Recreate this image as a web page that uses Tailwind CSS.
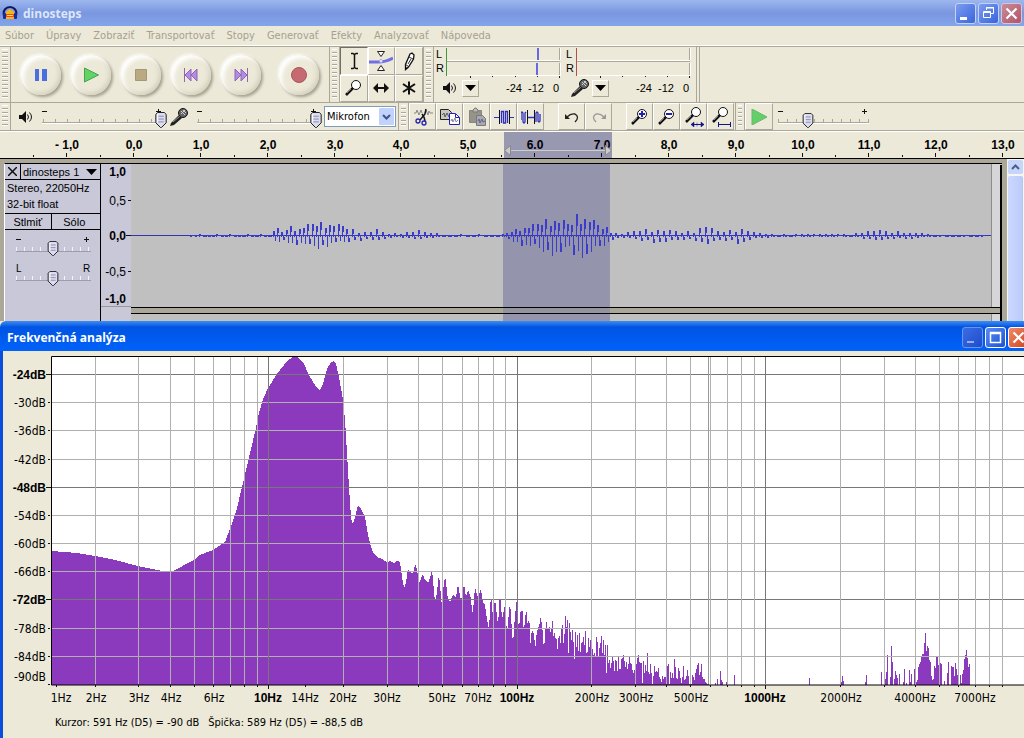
<!DOCTYPE html>
<html lang="sk">
<head>
<meta charset="utf-8">
<title>dinosteps</title>
<script src="https://cdn.jsdelivr.net/npm/@tailwindcss/browser@4"></script>
</head>
<body class="min-h-screen overflow-x-hidden bg-[#ece9d8] font-['DejaVu_Sans_Condensed','DejaVu_Sans',sans-serif] text-[11px] leading-4 text-black">

<svg class="hidden">
  <defs>
    <symbol id="thumb" viewBox="0 0 12 17"><path d="M2.500.500h7l2 2v9l-5 5h-1l-5-5v-9z" fill="#dcdcf0" stroke="#111"/><path d="M3 4.500h6M3 7.500h6M3 10.500h6" stroke="#8888a8"/><path d="M2.500 2v9" stroke="#fff"/></symbol>
    <symbol id="mic" viewBox="0 0 20 20"><path d="M1 19l1-3 8-8 3 3-8 7z" fill="#222"/><path d="M4 15l7-6" stroke="#999"/><circle cx="14" cy="6" r="4.500" fill="#666" stroke="#111"/><path d="M12 4l4 4M14 3l3 3M12 7l4-4" stroke="#ccc"/></symbol>
    <symbol id="speaker" viewBox="0 0 14 12"><path d="M0 4h3l4-4v12l-4-4H0z" fill="#111"/><path d="M8.500 3.500q2 2.500 0 5M10.500 1.500q4 4.500 0 9" fill="none" stroke="#111"/></symbol>
    <symbol id="lens" viewBox="0 0 20 20"><circle cx="12" cy="7" r="4.500" fill="#fff" stroke="#111"/><path d="M9 10l-7 7" stroke="#111" stroke-width="2.500"/><path d="M3 15l4-4" stroke="#888"/></symbol>
  </defs>
</svg>

<header class="flex h-[26px] items-center gap-[2px] bg-linear-to-b from-[#9db8ee] via-[#7a96df] to-[#82a6ea] px-[2px]">
  <svg class="size-4 shrink-0" viewBox="0 0 16 16"><path d="M2 11C-1 -1 17 -1 14 11" fill="none" stroke="#11185e" stroke-width="2"/><path d="M4 14V7q4-5 8 0v7z" fill="#f6b51e"/><path d="M4 9h8v3H4z" fill="#e8501c"/><path d="M5 10.500h6" stroke="#ffe14a"/><rect x="1" y="8" width="3" height="6" rx="1" fill="#1a2a9a"/><rect x="12" y="8" width="3" height="6" rx="1" fill="#1a2a9a"/></svg>
  <h1 class="flex-1 pt-[2px] pl-[3px] font-['Open_Sans','Noto_Sans',sans-serif] text-[12px] font-bold text-[#dce7fa]">dinosteps</h1>
  <div class="flex gap-[2px]">
    <button aria-label="Minimalizovať" class="size-[21px] rounded-[3px] border border-[#c3d3f6] bg-linear-to-br from-[#7c9cf0] to-[#3a63dc]"><svg viewBox="0 0 19 19"><path d="M4 13h7v3H4z" fill="#fff"/></svg></button>
    <button aria-label="Obnoviť" class="size-[21px] rounded-[3px] border border-[#c3d3f6] bg-linear-to-br from-[#7c9cf0] to-[#3a63dc]"><svg viewBox="0 0 19 19" fill="none" stroke="#fff"><path d="M7.500 6V3.500h7v6H12M7 4h8"/><path d="M4.500 7.500h7v6h-7zM4 8.500h8"/></svg></button>
    <button aria-label="Zavrieť" class="size-[21px] rounded-[3px] border border-[#d9c4d8] bg-linear-to-br from-[#c98a97] to-[#b0556a]"><svg viewBox="0 0 19 19"><path d="M4.500 4.500l10 10M14.500 4.500l-10 10" stroke="#fff" stroke-width="2.200"/></svg></button>
  </div>
</header>

<nav class="flex h-[20px] items-center gap-[12px] border-b border-white pl-[5px] text-[#a5a191]">
  <a href="#">Súbor</a><a href="#">Úpravy</a><a href="#">Zobraziť</a><a href="#">Transportovať</a><a href="#">Stopy</a><a href="#">Generovať</a><a href="#">Efekty</a><a href="#">Analyzovať</a><a href="#">Nápoveda</a>
</nav>

<section aria-label="Ovládanie" class="flex h-[57px] border-y border-[#aca899]">
  <div class="flex w-[11px] shrink-0 border-r border-[#aca899] p-[2px]"><i class="flex-1 bg-[repeating-linear-gradient(to_bottom,#fff_0_1px,#ece9d8_1px_3px,#aca899_3px_4px)]"></i></div>
  <div class="flex w-[318px] shrink-0 items-center gap-[10px] pl-[10px]">
    <button aria-label="Pozastaviť" class="grid size-[40px] place-items-center rounded-full bg-[#ece9d8] shadow-[2px_2px_3px_#a5a08e,-1px_-1px_3px_#fff,inset_3px_3px_4px_#fff,inset_-2px_-2px_4px_#d5d0bd]"><svg class="size-4" viewBox="0 0 16 16"><path d="M2 2h4v12H2zM9 2h5v12H9z" fill="#4c6fe0"/></svg></button>
    <button aria-label="Prehrať" class="grid size-[40px] place-items-center rounded-full bg-[#ece9d8] shadow-[2px_2px_3px_#a5a08e,-1px_-1px_3px_#fff,inset_3px_3px_4px_#fff,inset_-2px_-2px_4px_#d5d0bd]"><svg class="size-4" viewBox="0 0 16 16"><path d="M1.500 1v14l14-7z" fill="#60d465" stroke="#48a050"/></svg></button>
    <button aria-label="Zastaviť" class="grid size-[40px] place-items-center rounded-full bg-[#ece9d8] shadow-[2px_2px_3px_#a5a08e,-1px_-1px_3px_#fff,inset_3px_3px_4px_#fff,inset_-2px_-2px_4px_#d5d0bd]"><svg class="size-4" viewBox="0 0 16 16"><path d="M2.500 2.500h11v11h-11z" fill="#baa982" stroke="#a39776"/></svg></button>
    <button aria-label="Na začiatok" class="grid size-[40px] place-items-center rounded-full bg-[#ece9d8] shadow-[2px_2px_3px_#a5a08e,-1px_-1px_3px_#fff,inset_3px_3px_4px_#fff,inset_-2px_-2px_4px_#d5d0bd]"><svg class="size-4" viewBox="0 0 16 16"><path d="M1.500 1v14M8 2v12L2 8zM14 2v12L8 8z" fill="#b58ae4" stroke="#8a68b4"/></svg></button>
    <button aria-label="Na koniec" class="grid size-[40px] place-items-center rounded-full bg-[#ece9d8] shadow-[2px_2px_3px_#a5a08e,-1px_-1px_3px_#fff,inset_3px_3px_4px_#fff,inset_-2px_-2px_4px_#d5d0bd]"><svg class="size-4" viewBox="0 0 16 16"><path d="M14.500 1v14M8 2v12l6-6zM2 2v12l6-6z" fill="#b58ae4" stroke="#8a68b4"/></svg></button>
    <button aria-label="Nahrávať" class="ml-2 grid size-[40px] place-items-center rounded-full bg-[#ece9d8] shadow-[2px_2px_3px_#a5a08e,-1px_-1px_3px_#fff,inset_3px_3px_4px_#fff,inset_-2px_-2px_4px_#d5d0bd]"><svg class="size-4" viewBox="0 0 16 16"><circle cx="8" cy="8" r="7.500" fill="#c46a70" stroke="#a8555c"/></svg></button>
  </div>
  <div class="flex w-[11px] shrink-0 border-x border-[#aca899] p-[2px]"><i class="flex-1 bg-[repeating-linear-gradient(to_bottom,#fff_0_1px,#ece9d8_1px_3px,#aca899_3px_4px)]"></i></div>
  <div class="grid w-[83px] shrink-0 grid-cols-3 grid-rows-2">
    <button aria-label="Výber" class="grid place-items-center border border-t-[#716f64] border-r-white border-b-white border-l-[#716f64]"><svg class="size-5" viewBox="0 0 20 20"><path d="M7 2.500h2l1.500 1 1.500-1h2M7 17.500h2l1.500-1 1.500 1h2M10.500 3v14" fill="none" stroke="#111" stroke-width="1.500"/></svg></button>
    <button aria-label="Obálka" class="grid place-items-center border border-t-white border-r-[#aca899] border-b-[#aca899] border-l-white"><svg class="h-5 w-6" viewBox="0 0 24 20"><path d="M0 11h10q6 0 14-4" fill="none" stroke="#7070e4" stroke-width="3"/><path d="M8.500.500h7l-3.500 5zM8.500 19.500h7l-3.500-5z" fill="#fff" stroke="#222"/><circle cx="12" cy="10" r="1.500" fill="#fff" stroke="#a0a0e8"/></svg></button>
    <button aria-label="Kreslenie" class="grid place-items-center border border-t-white border-r-[#aca899] border-b-[#aca899] border-l-white"><svg class="size-5" viewBox="0 0 20 20"><path d="M11 3l2-1 2 2-.5 4-5 8-3 2.500v-5z" fill="#fff" stroke="#111" stroke-width="1.300"/><path d="M10 6l4 2M6.500 13.500l3 2M12 8l-3 5" stroke="#333"/><path d="M6.500 16v2.500l2-1.500z"/></svg></button>
    <button aria-label="Lupa" class="grid place-items-center border border-t-white border-r-[#aca899] border-b-[#aca899] border-l-white"><svg class="size-5"><use href="#lens"/></svg></button>
    <button aria-label="Posun" class="grid place-items-center border border-t-white border-r-[#aca899] border-b-[#aca899] border-l-white"><svg class="size-5" viewBox="0 0 20 20"><path d="M4 10h12" stroke="#111" stroke-width="2"/><path d="M7 5v10l-5-5zM13 5v10l5-5z" fill="#111"/></svg></button>
    <button aria-label="Multi-nástroj" class="grid place-items-center border border-t-white border-r-[#aca899] border-b-[#aca899] border-l-white"><svg class="size-5" viewBox="0 0 20 20"><path d="M10 3.500v13M4 6l12 8M16 6L4 14" stroke="#111" stroke-width="2"/></svg></button>
  </div>
  <div class="flex w-[11px] shrink-0 border-x border-[#aca899] p-[2px]"><i class="flex-1 bg-[repeating-linear-gradient(to_bottom,#fff_0_1px,#ece9d8_1px_3px,#aca899_3px_4px)]"></i></div>
  <div class="flex w-[263px] shrink-0 font-['Liberation_Sans',sans-serif] text-[11px]">
    <div class="w-[130px]">
      <svg class="h-[31px] w-full" viewBox="0 0 130 31"><text x="2" y="11">L</text><text x="2" y="25">R</text><path d="M12.500 1v28" stroke="#3f9a3f"/><path d="M13 13.500h113M126.500 1v12M13 28.500h113M126.500 16v13" fill="none" stroke="#fff"/><path d="M13 14.500h113M125.500 1v12M125.500 16v12" stroke="#aca899"/><path d="M104 1v12M103 16v12" stroke="#6868e6" stroke-width="2"/><path d="M36.500 29v2M58.500 29v1M81.500 29v1M103.500 29v1M125.500 29v2" stroke="#222"/></svg>
      <div class="flex h-[20px] items-center"><svg class="ml-[9px] h-3 w-[14px]"><use href="#speaker"/></svg><button aria-label="Možnosti výstupu" class="ml-[5px] grid size-[17px] place-items-center border border-t-white border-r-[#aca899] border-b-[#aca899] border-l-white"><svg class="h-[6px] w-[11px]" viewBox="0 0 11 6"><path d="M0 0h11L5.500 6z"/></svg></button><span class="ml-auto">-24</span><span class="ml-[6px]">-12</span><span class="mr-[5px] ml-[9px]">0</span></div>
    </div>
    <div class="w-[133px] border-r border-[#aca899] pr-[2px]">
      <svg class="h-[31px] w-full" viewBox="0 0 130 31"><text x="2" y="11">L</text><text x="2" y="25">R</text><path d="M12.500 1v28" stroke="#b05050"/><path d="M13 13.500h113M126.500 1v12M13 28.500h113M126.500 16v13" fill="none" stroke="#fff"/><path d="M13 14.500h113M125.500 1v12M125.500 16v12" stroke="#aca899"/><path d="M36.500 29v2M58.500 29v1M81.500 29v1M103.500 29v1M125.500 29v2" stroke="#222"/></svg>
      <div class="flex h-[20px] items-center"><svg class="ml-[6px] size-5"><use href="#mic"/></svg><button aria-label="Možnosti vstupu" class="ml-[2px] grid size-[17px] place-items-center border border-t-white border-r-[#aca899] border-b-[#aca899] border-l-white"><svg class="h-[6px] w-[11px]" viewBox="0 0 11 6"><path d="M0 0h11L5.500 6z"/></svg></button><span class="ml-auto">-24</span><span class="ml-[6px]">-12</span><span class="mr-[5px] ml-[9px]">0</span></div>
    </div>
  </div>
  <div class="w-[3px] border-r border-[#aca899]"></div>
</section>

<section aria-label="Mixér a úpravy" class="flex h-[28px] items-center border-b border-[#aca899]">
  <div class="flex h-full w-[11px] shrink-0 border-r border-[#aca899] p-[2px]"><i class="flex-1 bg-[repeating-linear-gradient(to_bottom,#fff_0_1px,#ece9d8_1px_3px,#aca899_3px_4px)]"></i></div>
  <svg class="ml-[8px] h-3 w-[14px] shrink-0"><use href="#speaker"/></svg>
  <label class="relative ml-[8px] h-[26px] w-[128px] shrink-0">
    <svg class="size-full" viewBox="0 0 128 26"><path d="M1 7.500h5M115 7.500h5M117.500 5v5" stroke="#111"/><path d="M2 16.500h118" stroke="#aca899" stroke-width="3" stroke-dasharray="1 11"/><path d="M1 18.500h118" stroke="#aca899"/><path d="M1 19.500h118" stroke="#fff"/><use href="#thumb" x="114" y="8" width="12" height="16"/></svg>
    <input type="range" aria-label="Hlasitosť výstupu" value="100" class="absolute inset-0 w-full opacity-0">
  </label>
  <svg class="size-5 shrink-0"><use href="#mic"/></svg>
  <label class="relative ml-[7px] h-[26px] w-[128px] shrink-0">
    <svg class="size-full" viewBox="0 0 128 26"><path d="M1 7.500h5M115 7.500h5M117.500 5v5" stroke="#111"/><path d="M2 16.500h118" stroke="#aca899" stroke-width="3" stroke-dasharray="1 11"/><path d="M1 18.500h118" stroke="#aca899"/><path d="M1 19.500h118" stroke="#fff"/><use href="#thumb" x="114" y="8" width="12" height="16"/></svg>
    <input type="range" aria-label="Hlasitosť vstupu" value="100" class="absolute inset-0 w-full opacity-0">
  </label>
  <div class="relative h-[21px] w-[72px] shrink-0">
    <select aria-label="Zdroj vstupu" class="h-full w-full appearance-none border border-[#7f9db9] bg-white pt-[1px] pl-[2px]"><option>Mikrofon</option></select>
    <svg class="pointer-events-none absolute top-[2px] right-[2px] h-[17px] w-[15px]" viewBox="0 0 15 17"><rect width="15" height="17" rx="1" fill="#c1d2fb"/><path d="M4 7l3.500 3.500L11 7" fill="none" stroke="#3d5489" stroke-width="2"/></svg>
  </div>
  <div class="ml-[2px] flex h-full w-[11px] shrink-0 border-x border-[#aca899] p-[2px]"><i class="flex-1 bg-[repeating-linear-gradient(to_bottom,#fff_0_1px,#ece9d8_1px_3px,#aca899_3px_4px)]"></i></div>
  <div class="flex h-full shrink-0">
    <button aria-label="Vystrihnúť" class="grid w-[27px] place-items-center border border-t-white border-r-[#aca899] border-b-[#aca899] border-l-white"><svg class="size-5" viewBox="0 0 20 20" fill="none"><path d="M1 6h2l1-3 2 5 2-5 1 3M12 6l1-3 2 5 1-4 1 2h3" stroke="#888"/><path d="M13 2l-1 5-5 6M9 7l2 3 1 4" stroke="#112" stroke-width="1.500"/><circle cx="5" cy="14" r="2" stroke="#2222b0" stroke-width="1.300"/><circle cx="11" cy="16" r="2" stroke="#2222b0" stroke-width="1.300"/></svg></button>
    <button aria-label="Kopírovať" class="grid w-[27px] place-items-center border border-t-white border-r-[#aca899] border-b-[#aca899] border-l-white"><svg class="size-5" viewBox="0 0 20 20"><path d="M.500 2.500h8l3 3v7H.500z" fill="#c8c8c0" stroke="#222"/><path d="M2 8l2-2 1 4 2-4 2 4" fill="none" stroke="#555"/><path d="M9.500 6.500h6l4 4v7h-10z" fill="#fff" stroke="#2222b0"/><path d="M15.500 7v3.500h4" fill="none" stroke="#2222b0"/><path d="M11 14l1-2 1 3 2-4 1 4 2-2" fill="none" stroke="#8888a0"/></svg></button>
    <button aria-label="Vložiť" class="grid w-[27px] place-items-center border border-t-white border-r-[#aca899] border-b-[#aca899] border-l-white"><svg class="size-5" viewBox="0 0 20 20"><path d="M2.500 3.500h12v12h-12z" fill="#96948a" stroke="#88867a"/><path d="M6 5V3l2-2h1l2 2v2z" fill="#bbb" stroke="#777"/><path d="M9.500 8.500h6l3 3v7h-9z" fill="#a8a8b0" stroke="#777788"/><path d="M11 14l1-2 1 4 2-4 1 3 2-1" fill="none" stroke="#667"/></svg></button>
    <button aria-label="Orezať" class="grid w-[27px] place-items-center border border-t-white border-r-[#aca899] border-b-[#aca899] border-l-white"><svg class="size-5" viewBox="0 0 20 20" fill="none" stroke="#3030c0"><path d="M0 10.500h5M15 10.500h5"/><path d="M5.500 3v14M15.500 3v14" stroke="#111"/><path d="M7.500 16V4.500h2V16h2V4.500h2V16" stroke-width="1.300"/></svg></button>
    <button aria-label="Stíšiť" class="grid w-[27px] place-items-center border border-t-white border-r-[#aca899] border-b-[#aca899] border-l-white"><svg class="size-5" viewBox="0 0 20 20" fill="none" stroke="#3030c0"><path d="M0 13V6l1-1 1 1v9l1 1 1-1V6l1-1M7 10.500h6M15 15V6l1-1 1 1v8l1 1 1-1V7" stroke-width="1.300"/><path d="M6.500 3v14M13.500 3v14" stroke="#111"/></svg></button>
    <button aria-label="Späť" class="ml-[14px] grid w-[27px] place-items-center border border-t-white border-r-[#aca899] border-b-[#aca899] border-l-white"><svg class="size-5" viewBox="0 0 20 20" fill="none"><path d="M5 10q4-4 8-3 5 3 0 8" stroke="#222" stroke-width="1.300"/><path d="M3 7v5h5z" fill="#222"/></svg></button>
    <button aria-label="Znova" class="grid w-[27px] place-items-center border border-t-white border-r-[#aca899] border-b-[#aca899] border-l-white"><svg class="size-5" viewBox="0 0 20 20" fill="none"><path d="M15 10q-4-4-8-3-5 3 0 8" stroke="#999" stroke-width="1.300"/><path d="M17 7v5h-5z" fill="#999"/></svg></button>
    <button aria-label="Priblížiť" class="ml-[14px] grid w-[27px] place-items-center border border-t-white border-r-[#aca899] border-b-[#aca899] border-l-white"><svg class="size-5" viewBox="0 0 20 20"><use href="#lens"/><path d="M9 7h6M12 4v6" stroke="#2222b0" stroke-width="2"/></svg></button>
    <button aria-label="Oddialiť" class="grid w-[27px] place-items-center border border-t-white border-r-[#aca899] border-b-[#aca899] border-l-white"><svg class="size-5" viewBox="0 0 20 20"><use href="#lens"/><path d="M9 7h6" stroke="#2222b0" stroke-width="2"/></svg></button>
    <button aria-label="Prispôsobiť výber" class="grid w-[27px] place-items-center border border-t-white border-r-[#aca899] border-b-[#aca899] border-l-white"><svg class="size-5" viewBox="0 0 20 20"><use href="#lens" y="-2"/><path d="M7 17.500h13" stroke="#111188"/><path d="M10 15v5l-3-2.500zM17 15v5l3-2.500zM13 15.500v4" fill="#111188" stroke="#111188" stroke-width=".5"/></svg></button>
    <button aria-label="Prispôsobiť projekt" class="grid w-[27px] place-items-center border border-t-white border-r-[#aca899] border-b-[#aca899] border-l-white"><svg class="size-5" viewBox="0 0 20 20"><use href="#lens" y="-2"/><path d="M7 17.500h13M7.500 15v5M19.500 15v5" stroke="#111188"/></svg></button>
  </div>
  <div class="ml-[1px] flex h-full w-[10px] shrink-0 border-x border-[#aca899] p-[2px]"><i class="flex-1 bg-[repeating-linear-gradient(to_bottom,#fff_0_1px,#ece9d8_1px_3px,#aca899_3px_4px)]"></i></div>
  <button aria-label="Prehrať rýchlosťou" class="grid h-full w-[28px] shrink-0 place-items-center border border-t-white border-r-[#aca899] border-b-[#aca899] border-l-white"><svg class="size-4" viewBox="0 0 16 16"><path d="M1 0v16l15-8z" fill="#62cf68" stroke="#6ab56e"/></svg></button>
  <label class="relative ml-[4px] h-[26px] w-[94px] shrink-0">
    <svg class="size-full" viewBox="0 0 94 26"><path d="M1 7.500h5M85 7.500h5M87.500 5v5" stroke="#111"/><path d="M1 16.500h91" stroke="#aca899" stroke-width="3" stroke-dasharray="1 8"/><path d="M1 18.500h91" stroke="#aca899"/><path d="M1 19.500h91" stroke="#fff"/><use href="#thumb" x="25" y="9" width="12" height="15"/></svg>
    <input type="range" aria-label="Rýchlosť prehrávania" value="30" class="absolute inset-0 w-full opacity-0">
  </label>
</section>

<section aria-label="Časová os" class="overflow-hidden border-t border-b border-t-white border-b-black bg-[#ece9d8]">
  <svg class="h-[26px] w-[1024px] font-['Liberation_Sans',sans-serif] text-[12px] font-bold" viewBox="0 132 1024 26">
    <rect x="504" y="132" width="108" height="26" fill="#9898b0"/>
    <g id="ruler" text-anchor="middle"></g>
    <path d="M510 150.500h96" stroke="#ccc"/><path d="M504.500 150.500l6-5v10zM611.500 150.500l-6-5v10z" fill="#ccc" stroke="#888"/>
  </svg>
</section>

<main class="flex h-[162px] bg-[#aca899]">
  <div class="flex min-w-0 flex-1 border-r-[5px] border-[#aca899] pt-[4px] pl-[4px]">
    <aside class="flex w-[97px] shrink-0 flex-col border-t border-r border-l border-black border-l-white bg-[#c8c8d8] font-['Liberation_Sans',sans-serif]">
      <div class="flex h-[16px] border-b border-black">
        <button aria-label="Zavrieť stopu" class="grid w-[16px] place-items-center border-r border-black"><svg class="size-[9px]" viewBox="0 0 9 9"><path d="M0 0l9 9M9 0L0 9" stroke="#111" stroke-width="1.500"/></svg></button>
        <button class="flex flex-1 items-center justify-between pr-[3px] pl-[2px] leading-[14px]">dinosteps 1<svg class="h-[6px] w-[11px]" viewBox="0 0 11 6"><path d="M0 0h11L5.500 6z"/></svg></button>
      </div>
      <p class="h-[34px] border-b border-black pl-[2px]">Stereo, 22050Hz<br>32-bit float</p>
      <div class="flex h-[16px] border-b border-black text-center leading-[14px]"><button class="flex-1 border-r border-black">Stlmiť</button><button class="flex-1 pr-[3px]">Sólo</button></div>
      <label class="relative mt-[4px] ml-[10px] h-[26px] w-[78px]">
        <svg class="size-full" viewBox="0 0 78 26"><path d="M1 5.500h5M69 5.500h5M71.500 3v5" stroke="#111"/><path d="M1 15h75" stroke="#f4f4fa" stroke-width="4" stroke-dasharray="1 7"/><path d="M1 17.500h75" stroke="#9c9cae"/><use href="#thumb" x="32" y="7" width="12" height="15"/></svg>
        <input type="range" aria-label="Zosilnenie" class="absolute inset-0 w-full opacity-0">
      </label>
      <label class="relative mt-[3px] ml-[10px] h-[28px] w-[78px]">
        <svg class="size-full text-[10px]" viewBox="0 0 78 28"><text x="1" y="9">L</text><text x="68" y="9">R</text><path d="M1 15h75" stroke="#f4f4fa" stroke-width="4" stroke-dasharray="1 7"/><path d="M1 17.500h75" stroke="#9c9cae"/><use href="#thumb" x="32" y="8" width="12" height="15"/></svg>
        <input type="range" aria-label="Vyváženie" class="absolute inset-0 w-full opacity-0">
      </label>
    </aside>
    <svg class="h-[158px] w-[30px] shrink-0 border-t border-black bg-[#c8c8d8] font-['Liberation_Sans',sans-serif] text-[12px]" viewBox="101 164 30 157" text-anchor="end"><g class="font-bold"><text x="126" y="176">1,0</text><text x="126" y="240">0,0</text><text x="126" y="303">-1,0</text></g><text x="126" y="205">0,5</text><text x="126" y="276">-0,5</text><path d="M128 200.500h3M126 235.500h5M128 271.500h3" stroke="#111"/><path d="M101 306.500h30" stroke="#999"/></svg>
    <svg class="h-[158px] min-w-0 flex-1" viewBox="131 163 871 158" preserveAspectRatio="none" shape-rendering="crispEdges">
      <rect x="131" y="163" width="871" height="158" fill="#c0c0c0"/><rect x="992" y="163" width="9" height="158" fill="#d6d6d6"/><path d="M991.500 163v158" stroke="#8c8c8c"/>
      <rect x="131" y="308" width="870" height="5" fill="#aca899"/>
      <rect x="503" y="163" width="107" height="158" fill="#9494ac"/><rect x="503" y="308" width="107" height="5" fill="#9494a0"/>
      <path d="M131 163.500h871M131 307.500h870M131 313.500h870" stroke="#000"/><path d="M1001 165v156" stroke="#000" stroke-width="2"/>
      <path d="M131 235.500h860" stroke="#3434b4"/><path id="wave" fill="none" stroke="#3c3ccc"/>
    </svg>
  </div>
  <div class="flex w-[17px] shrink-0 flex-col bg-[#f6f5ef] px-[1px] pt-[1px]">
    <button aria-label="Posunúť nahor" class="h-[14px] rounded-[2px] bg-[#c5d5fc]"><svg class="mx-auto h-[14px] w-[13px]" viewBox="0 0 13 14"><path d="M3 9l3.500-3.500L10 9" fill="none" stroke="#4d6185" stroke-width="2"/></svg></button>
    <div class="mt-[2px] flex-1 rounded-t-[2px] border-r border-[#b4c6f4] bg-linear-to-r from-[#ccd8ff] to-[#bccbfa]"></div>
  </div>
</main>

<section aria-label="Frekvenčná analýza" class="flex flex-col">
  <header class="flex h-[30px] items-center gap-[2px] overflow-hidden rounded-tl-[6px] bg-linear-to-b from-[#3c8cf0] from-0% via-[#0054e3] via-20% to-[#0062fa] pt-[2px] pl-[7px]">
    <h2 class="flex-1 pt-[2px] font-['Open_Sans','Noto_Sans',sans-serif] text-[12px] font-bold text-white">Frekvenčná analýza</h2>
    <button aria-label="Minimalizovať" class="size-[21px] rounded-[3px] border border-[#6a94ee] bg-linear-to-br from-[#3c6ce4] to-[#1c4ccc]"><svg viewBox="0 0 19 19"><path d="M4 13h7v2H4z" fill="#8fb0f6"/></svg></button>
    <button aria-label="Maximalizovať" class="size-[21px] rounded-[3px] border border-white bg-linear-to-br from-[#5a8cf4] to-[#1c50d4]"><svg viewBox="0 0 19 19"><path d="M4.500 4.500h10v10h-10zM4 5.500h11" fill="none" stroke="#fff" stroke-width="1.500"/></svg></button>
    <button aria-label="Zavrieť analýzu" class="-mr-[5px] size-[21px] shrink-0 rounded-[3px] border border-white bg-linear-to-br from-[#f08a68] to-[#d04018]"><svg viewBox="0 0 19 19"><path d="M4.500 4.500l10 10M14.500 4.500l-10 10" stroke="#fff" stroke-width="2.200"/></svg></button>
  </header>
  <div class="border-l-[3px] border-[#0a4cdc] pb-[5px]">
    <svg class="block h-auto w-full text-[12px]" viewBox="3 351 1021 362">
      <rect x="51" y="356" width="973" height="329" fill="#fff"/>
      <path id="spectrum" fill="#8c3abd" shape-rendering="crispEdges"/>
      <g id="grid" shape-rendering="crispEdges"></g>
      <path d="M1024 356.500H51.500v328.500H1024" fill="none" stroke="#000"/>
      <g id="axes"></g>
    </svg>
    <p class="flex gap-[9px] pl-[52px] leading-[20px]"><span>Kurzor: 591 Hz (D5) = -90 dB</span><span>Špička: 589 Hz (D5) = -88,5 dB</span></p>
  </div>
</section>

<script>
const $ = id => document.getElementById(id);

// time ruler, one second every 66.85px
let out = '';
for (let s = -1; s <= 13; s++) {
  const x = Math.round(133 + s * 66.85), label = s === -1 ? '- 1,0' : s === 6 || s === 7 ? s + '.0' : s + ',0';
  out += `<text x="${x + 1}" y="149">${label}</text><path d="M${x + .5} 153v4M${x - 32.5} 155v2" stroke="#111"/>`;
}
$('ruler').innerHTML = out;

// waveform envelope: x, amplitude above, amplitude below
const env = [[131,0,0],[185,0,0],[200,1,1],[268,1,1],[272,4,3],[275,8,9],[281,4,4],[290,9,8],[299,7,7],[307,10,9],[315,13,12],[322,12,10],[333,11,6],[345,9,6],[355,5,5],[365,3,3],[376,6,5],[385,2,2],[400,2,2],[415,5,4],[430,3,2],[445,1,1],[500,1,1],[510,4,5],[522,8,9],[532,10,10],[545,15,16],[552,16,16],[560,14,15],[567,12,10],[572,15,18],[577,21,17],[583,18,18],[590,15,14],[597,11,10],[605,8,8],[612,3,2],[622,2,2],[640,6,5],[660,6,6],[680,4,4],[693,4,4],[703,11,8],[710,7,6],[720,4,4],[740,7,7],[750,4,3],[760,2,2],[790,1,1],[830,2,1],[850,1,1],[862,4,3],[877,5,5],[890,4,3],[910,3,3],[930,1,1],[991,0,1]];
const level = (x, k) => {
  let i = 0;
  while (env[i + 1][0] < x) i++;
  const a = env[i], b = env[i + 1];
  return a[k] + (b[k] - a[k]) * (x - a[0]) / (b[0] - a[0]);
};
// each cycle: a narrow crest above the axis, then a narrow trough below it
let d = '', cycle = 0;
for (let x = 190; x < 986; cycle++) {
  const vary = [1, .75, 1.1, .6, .95, .85, 1.15][cycle % 7];
  const top = Math.round(235.5 - level(x, 1) * vary), low = Math.round(235.5 + level(x, 2) * (1.7 - vary * .7));
  const wide = x > 345 && x < 500 || x > 612 || cycle % 3 === 0;
  d += `M${x + .5} 237V${top}M${x + 1.5} ${top}V${Math.round((top + 238) / 2)}M${x + 2.5} 235V${low}`;
  if (wide) d += `M${x + 3.5} ${low}V${Math.round((low + 234) / 2)}`;
  x += x > 612 || (x > 345 && x < 500) ? 6 : wide ? 5 : 4;
}
$('wave').setAttribute('d', d);

// spectrum: smooth outline up to 520px, single columns after it
const curve = [51,551,77,553,95,556,115,560,138,566,157,570,163,571,173,571,194,560,200,555,213,550,225,542,230,529,236,512,242,487,250,453,256,428,258,417,262,402,268,388,277,374,287,361,293,357,297,357,303,362,310,377,317,388,320,390,323,384,327,369,331,362,334,361,336,364,339,377,343,400,345,420,347,453,349,487,351,518,353,524,355,518,358,505,361,509,365,517,368,535,370,543,373,553,377,557,382,559,387,562,390,561,394,563,397,561,400,562,402,577,404,588,406,583,408,569,412,574,414,571,415,563,417,569,419,583,423,574,425,580,428,583,430,578,432,569,435,603,437,592,439,574,442,608,444,580,446,578,447,595,450,602,453,595,456,597,458,584,461,601,464,584,466,597,468,590,471,598,472,612,473,611,475,587,478,598,481,589,483,603,485,605,487,619,489,629,491,593,493,618,495,598,498,625,500,592,502,619,505,605,507,633,510,602,513,645,515,615,517,598,519,633,520,613];
const dense = [612,611,611,627,625,615,612,623,621,623,643,633,631,633,640,646,635,630,627,624,618,622,630,644,643,629,622,628,629,627,632,628,621,636,633,638,639,649,638,636,643,629,625,643,634,616,627,620,653,623,632,640,630,642,659,632,647,635,651,633,652,643,642,637,645,631,653,652,638,647,640,656,649,655,653,656,637,642,657,648,643,636,653,640,655,645,673,645,663,660,668,663,657,661,671,660,661,671,657,669,669,659,658,655,661,667,662,669,664,657,663,664,670,673,670,667,664,658,655,662,663,663,683,661,673,665,671,653,672,674,664,673,684,676,666,672,671,672,668,677,679,682,676,679,677,677,684,666,664,684,672,678,673,678,659,667,678,679,668,671,678,683,677,666,680,679,676,670,676,684,684,684,675,677,680,673,669,665,663,675,672,664,677,679,679,682,683,684,682];
const sparse = [715,683,717,679,720,671,721,680,722,682,726,682,734,675,809,678,841,682,842,676,843,681,865,682,866,675,881,672,885,679,886,672,887,655,890,677,891,646,892,662,894,679,895,671,896,675,897,678,899,674,903,682,904,669,906,683,909,670,910,682,911,674,914,669,916,682,917,680,918,667,919,664,920,662,921,656,922,654,923,654,924,643,925,633,926,651,927,646,928,648,929,660,930,662,931,676,932,680,933,679,934,666,935,668,936,657,937,656,938,665,940,663,941,664,944,681,947,673,948,662,951,666,952,667,953,667,954,676,955,663,956,669,957,675,960,675,961,683,962,674,963,670,964,659,965,655,966,650,967,658,968,667,969,664];
d = 'M51 685';
for (let n = 0; n < curve.length; n += 2) d += `L${curve[n]} ${curve[n + 1]}`;
d += 'V685Z';
dense.forEach((y, n) => d += `M${520 + n} 685V${y}h1V685z`);
for (let n = 0; n < sparse.length; n += 2) d += `M${sparse[n]} 685V${sparse[n + 1]}h1V685z`;
$('spectrum').setAttribute('d', d);

const bold = ` class="font-['Liberation_Sans',sans-serif] font-bold"`;
const rows = [374,402,430,459,487,515,543,571,599,628,656,684];
const cols = [95,138,170,194,213,230,244,257,268,343,387,418,442,462,478,493,505,517,591,635,666,690,708,710,727,741,754,765,840,884,915,939,958,975,989,1002];
out = ''; let axes = '';
rows.forEach((y, n) => {
  const major = n % 4 === 0;
  if (n < 11) out += `<path d="M52 ${y + .5}H1024" stroke="${major ? '#777' : '#b0b0b0'}"/>`;
  axes += `<text x="46" y="${n === 11 ? 681 : y + 5}" text-anchor="end"${major ? bold : ''}>-${24 + n * 6}dB</text><path d="M${major ? 46 : 48} ${y + .5}h${major ? 5 : 2}" stroke="#111"/>`;
});
cols.forEach(x => {
  const major = [268, 517, 765].includes(x);
  out += `<path d="M${x + .5} 357V684" stroke="${major ? '#777' : x === 708 ? '#999' : '#b0b0b0'}"/>`;
  if (x !== 708) axes += `<path d="M${x + .5} 685v${major ? 4 : 2}" stroke="#111"/>`;
});
$('grid').innerHTML = out;
[[61,1],[96,2],[139,3],[171,4],[214,6],[268,10],[305,14],[343,20],[387,30],[442,50],[478,70],[517,100],[592,200],[636,300],[691,500],[765,1000],[841,2000],[915,4000],[975,7000]].forEach(([x, f]) => {
  axes += `<text x="${x}" y="702" text-anchor="middle"${[10, 100, 1000].includes(f) ? bold : ''}>${f}Hz</text>`;
});
axes += '<path d="M305.500 685v2M56.500 685v2" stroke="#111"/>';
$('axes').innerHTML = axes;
</script>
</body>
</html>
